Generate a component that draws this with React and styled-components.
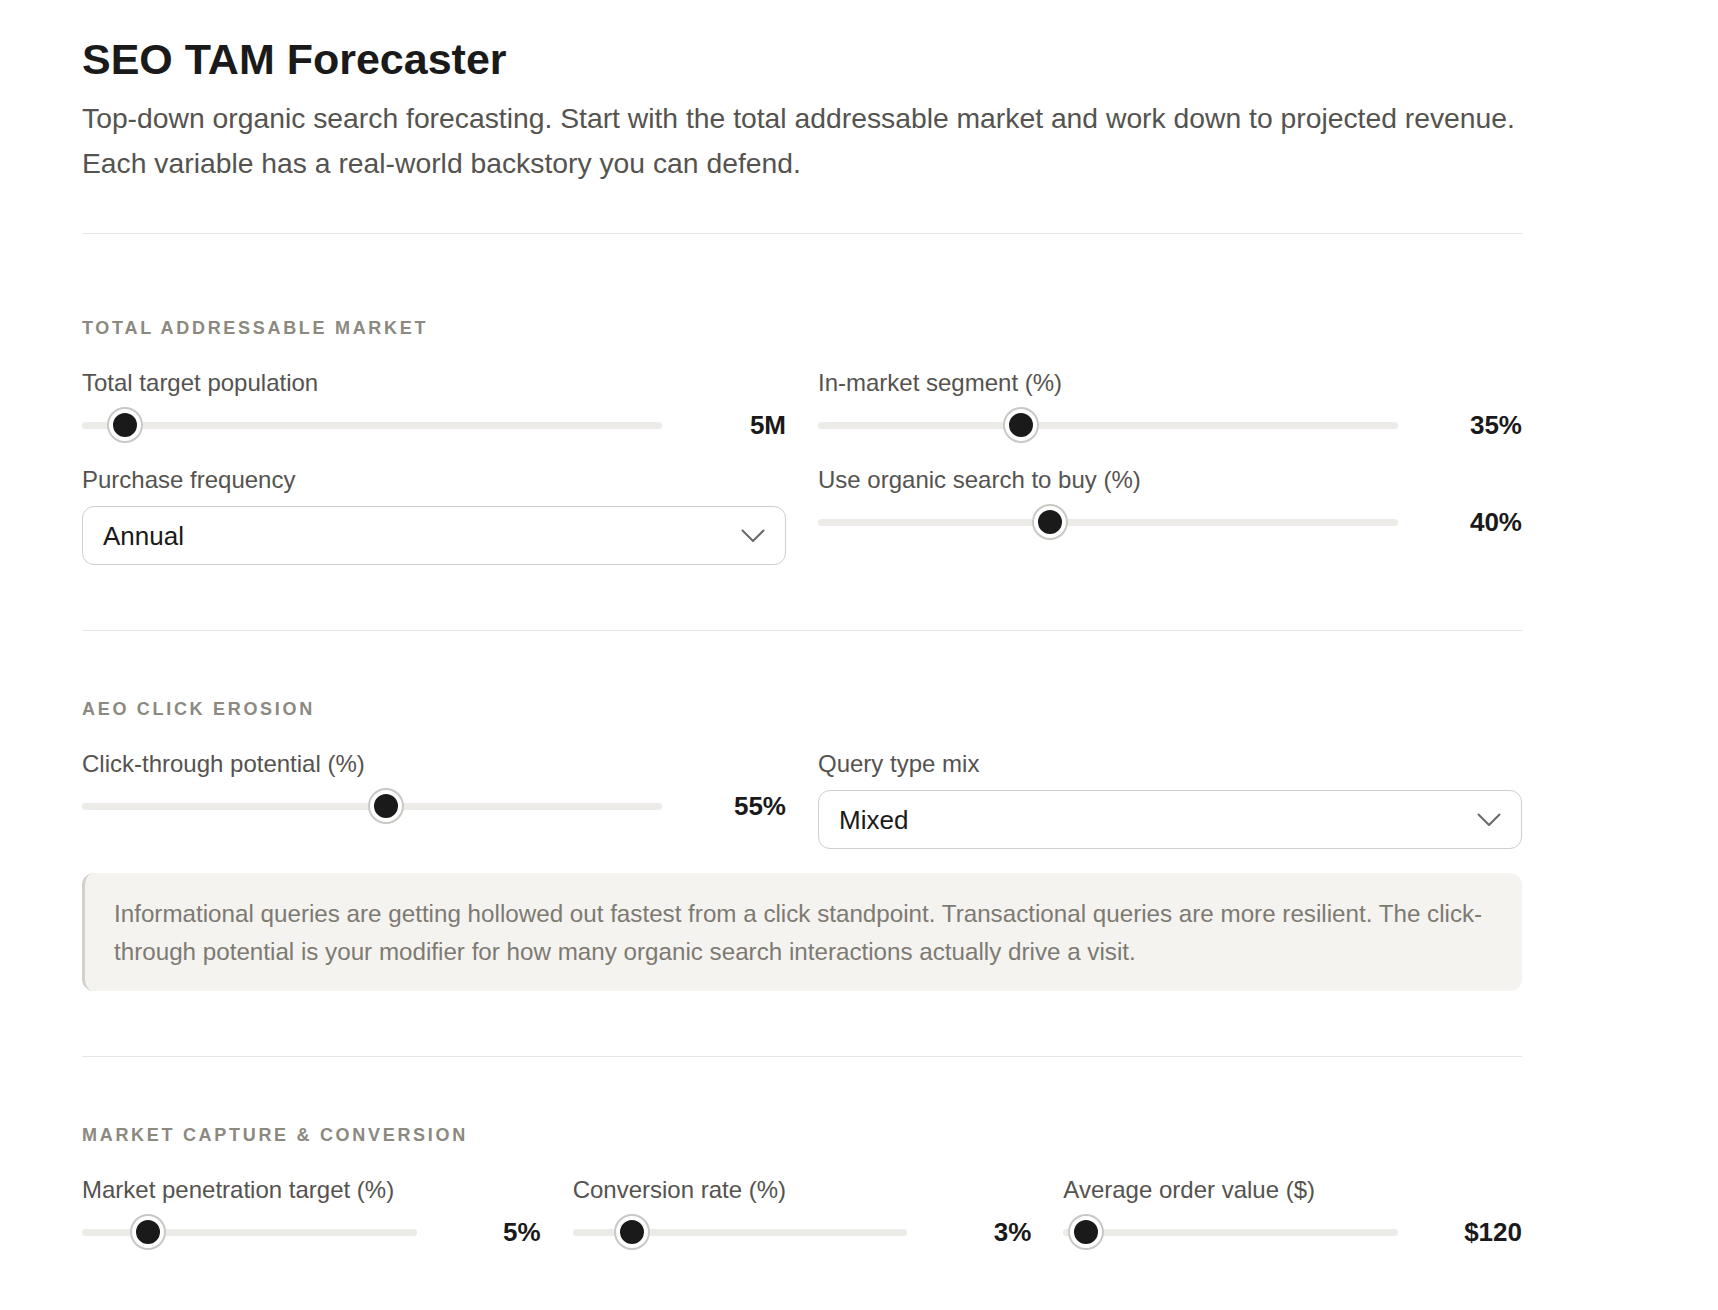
import React from "react";
import styled, { createGlobalStyle } from "styled-components";

const GlobalStyle = createGlobalStyle`
  body {
    margin: 0;
    background: #ffffff;
    font-family: "Liberation Sans", Arial, sans-serif;
    color: #1a1a1a;
  }
`;

function Slider({ label, value, pos }) {
  return (
    <Field>
      <Label>{label}</Label>
      <SliderRow>
        <Track>
          <Thumb style={{ left: `calc(${pos} * (100% - 36px))` }} />
        </Track>
        <Value>{value}</Value>
      </SliderRow>
    </Field>
  );
}

function Dropdown({ label, value, options }) {
  return (
    <Field>
      <Label>{label}</Label>
      <SelectWrap>
        <Select defaultValue={value}>
          {options.map((o) => (
            <option key={o}>{o}</option>
          ))}
        </Select>
        <Chevron width="24" height="14" viewBox="0 0 24 14" fill="none">
          <path d="M1.5 1.5 L12 12 L22.5 1.5" stroke="#6b6a66" strokeWidth="2" strokeLinecap="round" strokeLinejoin="round" />
        </Chevron>
      </SelectWrap>
    </Field>
  );
}

export default function App() {
  return (
    <>
      <GlobalStyle />
      <Page>
        <Header>
          <Title>SEO TAM Forecaster</Title>
          <Intro>
            Top-down organic search forecasting. Start with the total addressable market and work down to projected revenue.
            Each variable has a real-world backstory you can defend.
          </Intro>
        </Header>

        <Section $first>
          <SectionTitle>Total addressable market</SectionTitle>
          <Grid $cols={2}>
            <Column>
              <Slider label="Total target population" value="5M" pos={0.046} />
              <Dropdown label="Purchase frequency" value="Annual" options={["Annual", "Quarterly", "Monthly", "Weekly"]} />
            </Column>
            <Column>
              <Slider label="In-market segment (%)" value="35%" pos={0.34} />
              <Slider label="Use organic search to buy (%)" value="40%" pos={0.393} />
            </Column>
          </Grid>
        </Section>

        <Section>
          <SectionTitle>AEO click erosion</SectionTitle>
          <Grid $cols={2}>
            <Slider label="Click-through potential (%)" value="55%" pos={0.526} />
            <Dropdown label="Query type mix" value="Mixed" options={["Informational", "Mixed", "Transactional"]} />
          </Grid>
          <Note>
            Informational queries are getting hollowed out fastest from a click standpoint. Transactional queries are more resilient. The click-through potential is your modifier for how many organic search interactions actually drive a visit.
          </Note>
        </Section>

        <Section>
          <SectionTitle>Market capture &amp; conversion</SectionTitle>
          <Grid $cols={3}>
            <Slider label="Market penetration target (%)" value="5%" pos={0.161} />
            <Slider label="Conversion rate (%)" value="3%" pos={0.138} />
            <Slider label="Average order value ($)" value="$120" pos={0.017} />
          </Grid>
        </Section>
      </Page>
    </>
  );
}

const Page = styled.div`
  width: 1440px;
  padding: 34px 0 0 82px;
`;

const Header = styled.header`
  padding-bottom: 47px;
  border-bottom: 1px solid #e6e5e2;
`;

const Title = styled.h1`
  margin: 0 0 12px;
  font-size: 43px;
  line-height: 50px;
  font-weight: 700;
  color: #1a1a1a;
`;

const Intro = styled.p`
  margin: 0;
  font-size: 28.3px;
  line-height: 45px;
  color: #55534f;
`;

const Section = styled.section`
  padding: ${(p) => (p.$first ? "82px" : "66px")} 0 65px;
  border-bottom: 1px solid #e6e5e2;

  &:last-child {
    border-bottom: none;
    padding-bottom: 20px;
  }
`;

const SectionTitle = styled.h2`
  margin: 0 0 27px;
  font-size: 18px;
  line-height: 24px;
  font-weight: 700;
  text-transform: uppercase;
  letter-spacing: 0.15em;
  color: #8b8980;
`;

const Grid = styled.div`
  display: grid;
  grid-template-columns: repeat(${(p) => p.$cols}, 1fr);
  column-gap: 32px;
  row-gap: 23px;
`;

const Column = styled.div`
  display: flex;
  flex-direction: column;
  gap: 23px;
`;

const Field = styled.div`
  display: flex;
  flex-direction: column;
  gap: 10px;
`;

const Label = styled.label`
  font-size: 24px;
  line-height: 32px;
  color: #55534f;
`;

const SliderRow = styled.div`
  display: flex;
  align-items: center;
  gap: 24px;
  height: 32px;
`;

const Track = styled.div`
  position: relative;
  flex: 1;
  height: 7px;
  border-radius: 4px;
  background: #ecebe7;
`;

const Thumb = styled.span`
  position: absolute;
  top: 50%;
  width: 24px;
  height: 24px;
  margin-top: -16px;
  margin-left: 2px;
  border-radius: 50%;
  background: #1a1a1a;
  border: 4px solid #ffffff;
  box-shadow: 0 0 0 2px #c9c8c4;
`;

const Value = styled.span`
  min-width: 100px;
  text-align: right;
  font-size: 26px;
  font-weight: 700;
  color: #1a1a1a;
`;

const SelectWrap = styled.div`
  position: relative;
`;

const Select = styled.select`
  appearance: none;
  width: 100%;
  height: 59px;
  padding: 0 60px 0 20px;
  border: 1.5px solid #cfcecb;
  border-radius: 12px;
  background: #ffffff;
  font-family: "Liberation Sans", Arial, sans-serif;
  font-size: 26px;
  color: #1a1a1a;
  outline: none;
`;

const Chevron = styled.svg`
  position: absolute;
  right: 21px;
  top: 50%;
  margin-top: -7px;
  pointer-events: none;
`;

const Note = styled.div`
  margin-top: 24px;
  padding: 22px 24px 20px 29px;
  background: #f4f3f0;
  border-left: 3px solid #d3d1cb;
  border-radius: 12px;
  font-size: 24.2px;
  line-height: 38px;
  color: #7d7a72;
`;
